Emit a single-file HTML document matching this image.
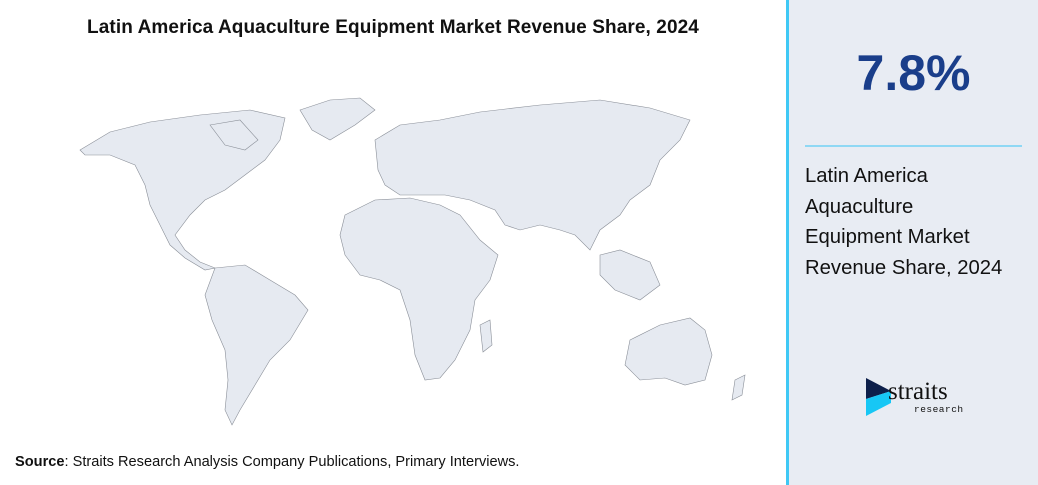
<!DOCTYPE html>
<html><head><style>
body{margin:0;width:1038px;height:485px;background:#fff;font-family:"Liberation Sans",sans-serif;position:relative;overflow:hidden}
.title{position:absolute;left:0;width:786px;top:17px;text-align:center;font-size:19px;font-weight:bold;color:#111;letter-spacing:0.1px}
.src{position:absolute;left:15px;top:454px;font-size:14.6px;color:#111}
.panel{position:absolute;left:786px;top:0;width:252px;height:485px;background:#e8ecf3;border-left:3px solid #3fc8f5;box-sizing:border-box}
.big{position:absolute;left:0;width:249px;top:44px;text-align:center;font-size:50px;font-weight:bold;color:#1a3e8a}
.hr{position:absolute;left:16px;width:217px;top:145px;height:2px;background:#8fd8f4}
.txt{position:absolute;left:16px;top:161px;font-size:20.3px;line-height:30.5px;color:#111}
</style></head><body>
<div class="title">Latin America Aquaculture Equipment Market Revenue Share, 2024</div>
<svg style="position:absolute;left:0;top:90px" width="786" height="350" viewBox="0 90 786 350">
<g fill="#e6eaf1" stroke="#8a8f98" stroke-width="0.6">
<path d="M80,150 L110,132 L150,122 L200,115 L250,110 L285,118 L280,140 L265,160 L245,175 L225,190 L205,200 L190,215 L175,235 L185,250 L200,262 L215,268 L205,270 L185,258 L170,245 L160,225 L150,205 L145,185 L135,165 L110,155 L85,155 Z"/>
<path d="M300,110 L330,100 L360,98 L375,110 L355,125 L330,140 L312,130 Z"/>
<path d="M210,125 L240,120 L258,140 L245,150 L225,145 Z"/>
<path d="M215,268 L245,265 L270,280 L295,295 L308,310 L290,340 L270,360 L255,385 L240,410 L232,425 L225,410 L228,380 L225,350 L212,320 L205,295 Z"/>
<path d="M375,140 L400,125 L440,120 L480,112 L540,105 L600,100 L650,108 L690,120 L680,140 L660,160 L650,185 L630,200 L620,215 L600,230 L590,250 L575,235 L560,230 L540,225 L520,230 L505,225 L495,210 L470,200 L445,195 L420,195 L400,195 L385,185 L378,170 Z"/>
<path d="M600,255 L620,250 L650,262 L660,285 L640,300 L615,290 L600,275 Z"/>
<path d="M345,215 L375,200 L410,198 L440,205 L460,215 L480,240 L498,255 L490,280 L475,300 L470,330 L455,360 L440,378 L425,380 L415,355 L410,320 L400,290 L380,280 L360,275 L345,255 L340,235 Z"/>
<path d="M480,325 L490,320 L492,345 L483,352 Z"/>
<path d="M630,340 L660,325 L690,318 L705,330 L712,355 L705,380 L685,385 L665,378 L640,380 L625,365 Z"/>
<path d="M735,380 L745,375 L742,395 L732,400 Z"/>
</g></svg>
<div class="src"><b>Source</b>: Straits Research Analysis Company Publications, Primary Interviews.</div>
<div class="panel">
<div class="big">7.8%</div>
<div class="hr"></div>
<div class="txt">Latin America<br>Aquaculture<br>Equipment Market<br>Revenue Share, 2024</div>
<svg style="position:absolute;left:77px;top:378px" width="30" height="38"><polygon points="0,0 25,13 0,21" fill="#0d1f4a"/><polygon points="0,38 25,25 25,13 0,21" fill="#17c7f5"/></svg>
<div style="position:absolute;left:99px;top:378px;font-family:'Liberation Serif',serif;font-size:25px;color:#111">straits</div>
<div style="position:absolute;left:125px;top:404px;font-family:'Liberation Mono',monospace;font-size:9.5px;color:#111;letter-spacing:0.5px">research</div>
</div>
</body></html>
